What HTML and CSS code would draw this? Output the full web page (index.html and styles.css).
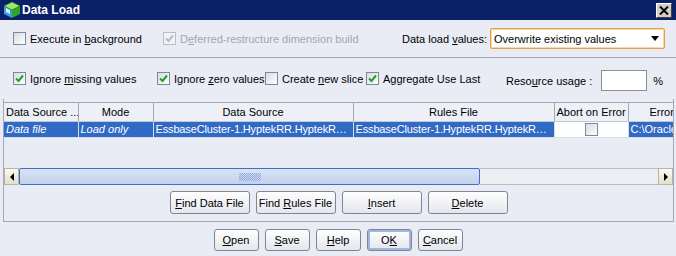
FILE: index.html
```html
<!DOCTYPE html>
<html>
<head>
  <title>Data Load</title>
  <link rel="stylesheet" href="styles.css">
</head>
<body>
  <div class="window">
    <div class="titlebar">
      <svg class="app-icon" width="18" height="18" viewBox="0 0 18 18">
        <polygon points="9,1 17,5 9,9 1,5" fill="#9be86a"/>
        <polygon points="1,5 9,9 9,17 1,13" fill="#3a9be0"/>
        <polygon points="9,9 17,5 17,13 9,17" fill="#2fa52c"/>
        <polygon points="3,7 7,9 7,13 3,11" fill="#d8f0ff"/>
        <polygon points="9,1 17,5 9,9 1,5" fill="none" stroke="#2c7a1c" stroke-width="0.6"/>
      </svg>
      <span class="title">Data Load</span>
      <span class="close-btn">
        <svg width="10" height="9" viewBox="0 0 10 9"><path d="M1 0.5 L9 8.5 M9 0.5 L1 8.5" stroke="#000" stroke-width="2"/></svg>
      </span>
    </div>

    <div class="row row-top">
      <label class="opt opt-exec"><span class="check"></span><span>Execute in <u>b</u>ackground</span></label>
      <label class="opt opt-deferred disabled"><span class="check checked grey"><svg width="11" height="11" viewBox="0 0 11 11"><path d="M2 5.5 L4.5 8 L9 2.5" fill="none" stroke="#b8bcc4" stroke-width="2"/></svg></span><span>D<u>e</u>ferred-restructure dimension build</span></label>
      <span class="load-label">Data load <u>v</u>alues:</span>
      <div class="select">
        <span>Overwrite existing values</span>
        <span class="arrow"></span>
      </div>
    </div>

    <div class="row row-second">
      <label class="opt w144"><span class="check checked"><svg width="11" height="11" viewBox="0 0 11 11"><path d="M2 5.5 L4.5 8 L9 2.5" fill="none" stroke="#21a121" stroke-width="2"/></svg></span><span>Ignore <u>m</u>issing values</span></label>
      <label class="opt w108"><span class="check checked"><svg width="11" height="11" viewBox="0 0 11 11"><path d="M2 5.5 L4.5 8 L9 2.5" fill="none" stroke="#21a121" stroke-width="2"/></svg></span><span>Ignore <u>z</u>ero values</span></label>
      <label class="opt w101"><span class="check"></span><span>Create <u>n</u>ew slice</span></label>
      <label class="opt w140"><span class="check checked"><svg width="11" height="11" viewBox="0 0 11 11"><path d="M2 5.5 L4.5 8 L9 2.5" fill="none" stroke="#21a121" stroke-width="2"/></svg></span><span>A<u>g</u>gregate Use Last</span></label>
      <div class="resource">
        <span class="res-label">Reso<u>u</u>rce usage :</span>
        <span class="res-input"></span>
        <span class="pct">%</span>
      </div>
    </div>

    <div class="panel">
      <div class="grid">
        <div class="grid-view">
          <table>
            <tr>
              <th class="c1">Data Source ...</th>
              <th class="c2">Mode</th>
              <th class="c3">Data Source</th>
              <th class="c4">Rules File</th>
              <th class="c5">Abort on Error</th>
              <th class="c6">Error File</th>
            </tr>
            <tr class="selected">
              <td class="it">Data file</td>
              <td class="it">Load only</td>
              <td class="path">EssbaseCluster-1.HyptekRR.HyptekRR.HyptekRR</td>
              <td class="path">EssbaseCluster-1.HyptekRR.HyptekRR.HyptekRR</td>
              <td class="abort"><span class="check small"></span></td>
              <td>C:\Oracle\Middleware\user_projects</td>
            </tr>
          </table>
        </div>
        <div class="hscroll">
          <span class="sbtn"><span class="tri-left"></span></span>
          <span class="thumb"><span class="grip"></span></span>
          <span class="track"></span>
          <span class="sbtn"><span class="tri-right"></span></span>
        </div>
      </div>
      <div class="btn-row">
        <button class="btn wide"><u>F</u>ind Data File</button>
        <button class="btn wide">Find <u>R</u>ules File</button>
        <button class="btn wide"><u>I</u>nsert</button>
        <button class="btn wide"><u>D</u>elete</button>
      </div>
    </div>

    <div class="btn-row footer">
      <button class="btn"><u>O</u>pen</button>
      <button class="btn"><u>S</u>ave</button>
      <button class="btn"><u>H</u>elp</button>
      <button class="btn focused">O<u>K</u></button>
      <button class="btn"><u>C</u>ancel</button>
    </div>
  </div>
</body>
</html>
```

FILE: styles.css
```css
body {
  margin: 0;
  font-family: "Liberation Sans", Arial, sans-serif;
  font-size: 11px;
  color: #000;
  background: #e9ecf5;
}

.window {
  width: 676px;
  height: 256px;
  background: #e9ecf5;
  overflow: hidden;
}

u {
  text-decoration: underline;
  text-underline-offset: 1px;
}

.titlebar {
  height: 20px;
  background: #0b2167;
  display: flex;
  align-items: center;
  padding-left: 3px;
  box-sizing: border-box;
}

.app-icon {
  margin-right: 1px;
}

.title {
  color: #fff;
  font-weight: bold;
  font-size: 12px;
}

.close-btn {
  margin-left: auto;
  margin-right: 4px;
  width: 16px;
  height: 15px;
  box-sizing: border-box;
  background: #d4d0c8;
  border: 1px solid;
  border-color: #fff #404040 #404040 #fff;
  display: flex;
  align-items: center;
  justify-content: center;
}

.row {
  display: flex;
  align-items: center;
}

.row-top {
  height: 38px;
  border-bottom: 1px solid #a4a8b0;
  padding-left: 13px;
  box-sizing: border-box;
}

.opt {
  display: flex;
  align-items: center;
  white-space: nowrap;
}

.check {
  width: 13px;
  height: 13px;
  box-sizing: border-box;
  border: 1px solid #7f8899;
  background: linear-gradient(135deg, #d8dce4, #fdfdfe);
  margin-right: 4px;
  display: flex;
  align-items: center;
  justify-content: center;
  flex: none;
}

.check.grey {
  border-color: #b9bdc6;
  background: #f0f2f6;
}

.disabled {
  color: #a3a6ad;
}

.opt-exec {
  width: 150px;
}

.load-label {
  margin-left: auto;
  margin-right: 3px;
}

.select {
  width: 175px;
  height: 21px;
  box-sizing: border-box;
  border: 1px solid #e2a244;
  border-radius: 2px;
  box-shadow: inset 0 0 0 1px #f7d9a6;
  background: #fff;
  margin-right: 11px;
  display: flex;
  align-items: center;
  padding-left: 3px;
  font-size: 11px;
}

.arrow {
  margin-left: auto;
  margin-right: 5px;
  width: 0;
  height: 0;
  border-left: 4px solid transparent;
  border-right: 4px solid transparent;
  border-top: 5px solid #000;
}

.row-second {
  height: 41px;
  padding-left: 13px;
  box-sizing: border-box;
}

.w144 { width: 144px; }
.w108 { width: 108px; }
.w101 { width: 101px; }
.w140 { width: 140px; }

.resource {
  display: flex;
  align-items: center;
  margin-top: 4px;
}

.res-label {
  margin-right: 9px;
}

.res-input {
  width: 46px;
  height: 21px;
  box-sizing: border-box;
  border: 1px solid #8a8f99;
  background: #fff;
  margin-right: 6px;
}

.panel {
  margin: 0 2px 0 3px;
  border: 1px solid #a4a8b0;
  border-top: none;
  height: 123px;
  box-sizing: border-box;
  padding-top: 3px;
}

.grid {
  border-top: 1px solid #a4a8b0;
}

.grid-view {
  height: 65px;
  overflow: hidden;
}

table {
  border-collapse: collapse;
  table-layout: fixed;
  width: 712px;
}

th {
  height: 18px;
  padding: 0 2px;
  font-weight: normal;
  background: #eef0f7;
  border-right: 1px solid #a4a8b0;
  border-bottom: 1px solid #c4c8d0;
  white-space: nowrap;
  overflow: hidden;
  box-sizing: border-box;
}

th.c1 { width: 74px; text-align: left; }
th.c2 { width: 75px; }
th.c3 { width: 200px; }
th.c4 { width: 201px; }
th.c5 { width: 74px; }
th.c6 { width: 88px; }

td {
  height: 16px;
  padding: 0 2px;
  white-space: nowrap;
  overflow: hidden;
  text-overflow: ellipsis;
  box-sizing: border-box;
}

td.path {
  letter-spacing: -0.15px;
}

.selected td {
  background: #316ac5;
  color: #fff;
  border-right: 1px solid #d5dcea;
  border-bottom: 1px solid #d5dcea;
}

.it {
  font-style: italic;
}

.selected td.abort {
  background: #fff;
  padding: 0;
}

.abort .check {
  margin: 0 auto;
}

.hscroll {
  height: 17px;
  display: flex;
}

.sbtn {
  width: 15px;
  height: 17px;
  box-sizing: border-box;
  background: linear-gradient(#fbfaf3, #e2dfcc);
  border: 1px solid #bab59f;
  display: flex;
  align-items: center;
  justify-content: center;
  flex: none;
}

.tri-left {
  border-top: 4px solid transparent;
  border-bottom: 4px solid transparent;
  border-right: 4px solid #000;
}

.tri-right {
  border-top: 4px solid transparent;
  border-bottom: 4px solid transparent;
  border-left: 4px solid #000;
}

.thumb {
  width: 461px;
  height: 17px;
  box-sizing: border-box;
  border: 1px solid #3d70c6;
  border-radius: 2px;
  background: linear-gradient(#d7e2f4, #c4d2ea);
  display: flex;
  align-items: center;
  justify-content: center;
  flex: none;
}

.grip {
  width: 22px;
  height: 8px;
  background-image: conic-gradient(#8eaae0 25%, transparent 0 50%, #8eaae0 0 75%, transparent 0);
  background-size: 2px 2px;
}

.track {
  flex: 1;
  height: 17px;
  box-sizing: border-box;
  background: #eceef3;
  border-top: 1px solid #b8bcc4;
  border-bottom: 1px solid #b8bcc4;
}

.btn-row {
  display: flex;
  justify-content: center;
  gap: 6px;
}

.panel .btn-row {
  margin-top: 6px;
}

.btn {
  width: 45px;
  height: 22px;
  padding: 0;
  font-family: "Liberation Sans", Arial, sans-serif;
  font-size: 11px;
  color: #000;
  border: 1px solid #80868f;
  border-radius: 3px;
  background: linear-gradient(#ffffff, #e4e6ec);
}

.btn.wide {
  width: 80px;
  height: 23px;
}

.btn.focused {
  box-shadow: inset 0 0 0 2px #9cb7e2;
}

.footer {
  margin-top: 7px;
}
```
